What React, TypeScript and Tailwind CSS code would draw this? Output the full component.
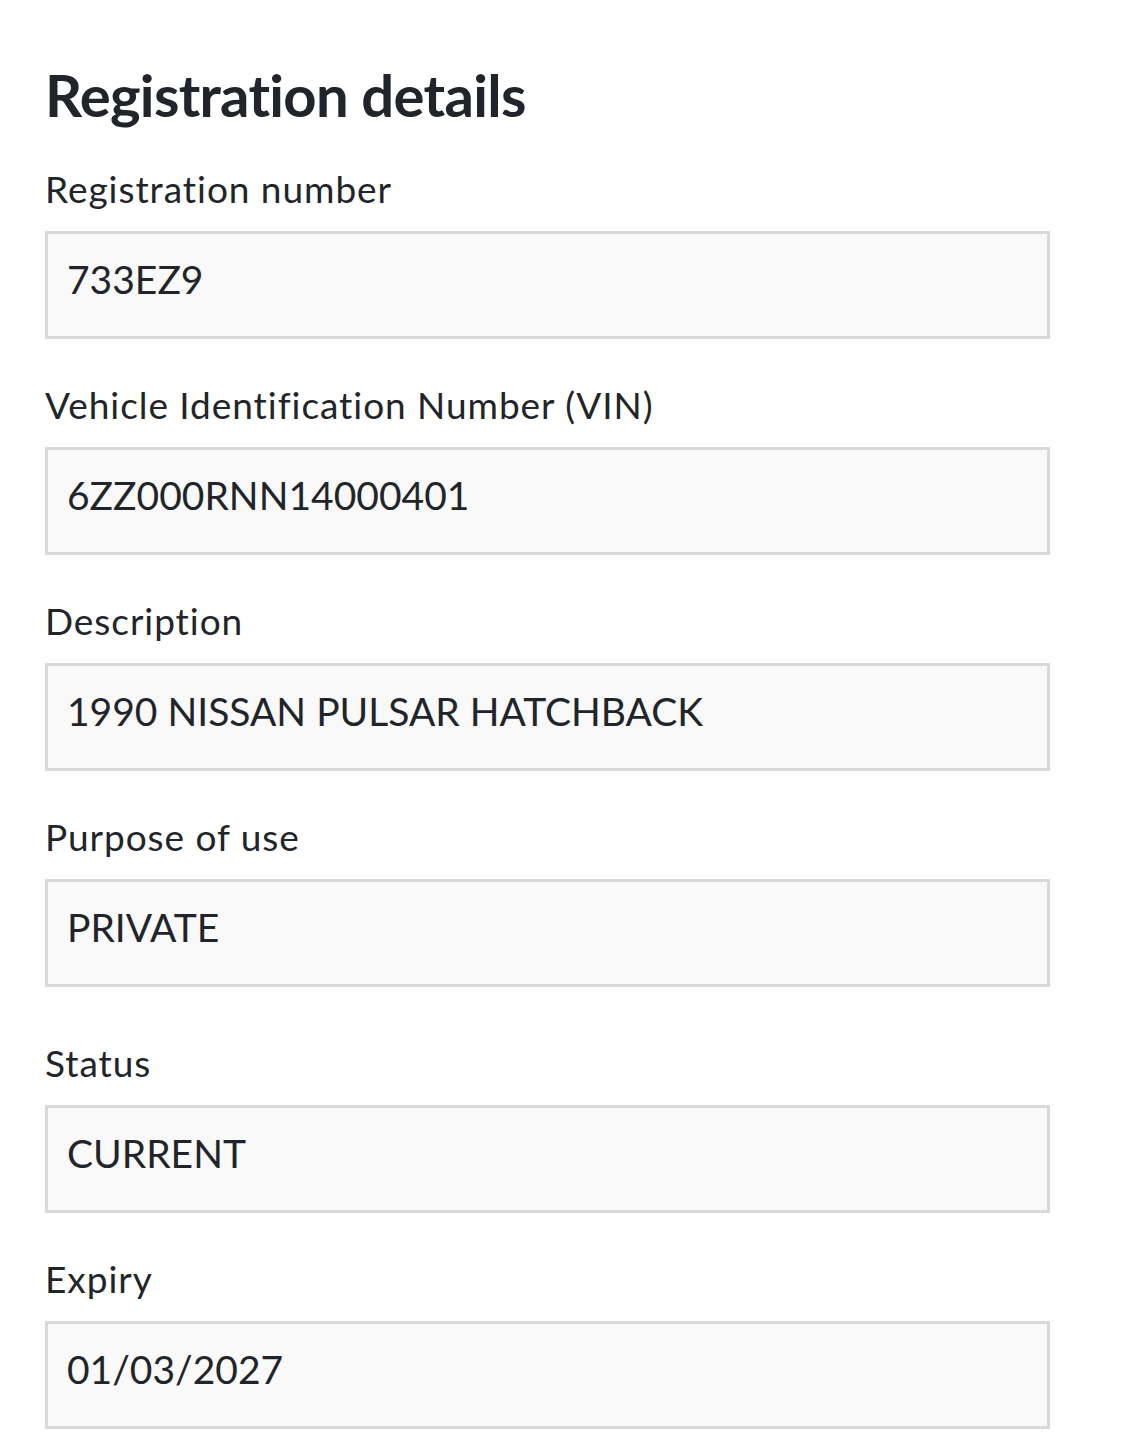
import React from "react";

const fields: { label: string; value: string; extra?: boolean }[] = [
  { label: "Registration number", value: "733EZ9" },
  { label: "Vehicle Identification Number (VIN)", value: "6ZZ000RNN14000401" },
  { label: "Description", value: "1990 NISSAN PULSAR HATCHBACK" },
  { label: "Purpose of use", value: "PRIVATE", extra: true },
  { label: "Status", value: "CURRENT" },
  { label: "Expiry", value: "01/03/2027" },
];

export default function App() {
  return (
    <div
      className="min-h-[1453px] w-[1125px] bg-white px-[45px] pt-[60px] text-[#212529] [font-variant-ligatures:none]"
      style={{ fontFamily: "Lato, 'Noto Sans', sans-serif" }}
    >
      <h1 className="text-[58px] font-bold leading-[70px] tracking-[-0.7px]">Registration details</h1>
      <div className="mt-[37px] flex w-[1005px] flex-col">
        {fields.map((f) => (
          <div key={f.label} className={f.extra ? "mb-[54px] flex flex-col" : "mb-[44px] flex flex-col"}>
            <label className="text-[37px] leading-[44px] tracking-[0.95px]">{f.label}</label>
            <div className="mt-[20px] h-[108px] border-[3px] border-[#d9d9d9] bg-[#f9f9f9] pl-[19px] pt-[22px] text-[39px] leading-[47px]">
              {f.value}
            </div>
          </div>
        ))}
      </div>
    </div>
  );
}
